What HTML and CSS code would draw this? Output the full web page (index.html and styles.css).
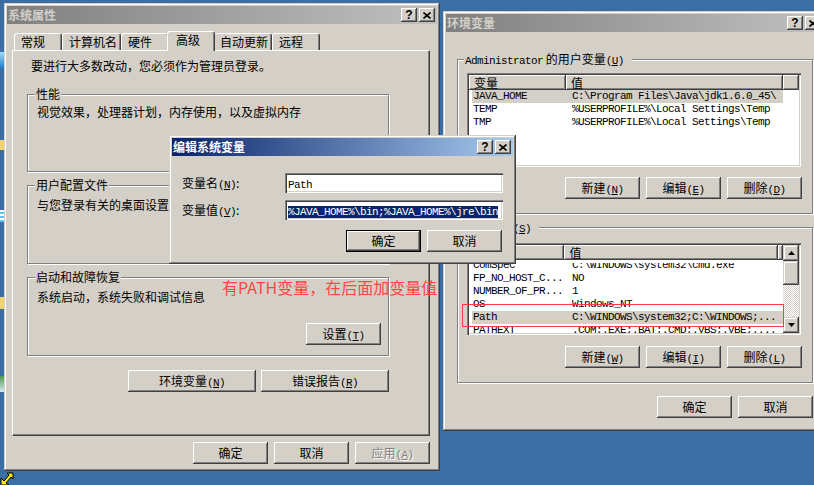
FILE: index.html
```html
<!DOCTYPE html>
<html>
	<head>
		<meta charset="utf-8"/>
		<meta name="viewport" content="width=device-width"/>
		<link rel="stylesheet" href="styles.css">
	</head>
	<body>
		<div class="dbit d1"></div>
		<div class="dbit d2"></div>
		<div class="dbit d3"></div>
		<div class="dbit d4"></div>
		<div class="dbit d5"></div>
		<svg class="shortcut" width="14" height="17" viewBox="0 0 14 17"><path d="M1 16V9l3 3 5-6-2-2h6v6l-2-2-5 6 3 2z" fill="#ffe800" stroke="#000" stroke-width="1"/></svg>

		<div class="win sysprop">
			<div class="titlebar off">
				<span class="caption">系统属性</span>
				<span class="tbtn help">?</span>
				<span class="tbtn close"><svg width="8" height="7" viewBox="0 0 8 7"><path d="M0.5 0.5L7.5 6.5M7.5 0.5L0.5 6.5"/></svg></span>
			</div>
			<div class="tabs">
				<div class="tab">常规</div>
				<div class="tab">计算机名</div>
				<div class="tab">硬件</div>
				<div class="tab on">高级</div>
				<div class="tab">自动更新</div>
				<div class="tab">远程</div>
			</div>
			<div class="panel">
				<p class="intro">要进行大多数改动，您必须作为管理员登录。</p>
				<fieldset class="group g1">
					<legend>性能</legend>
					<div class="gbody">
						<p>视觉效果，处理器计划，内存使用，以及虚拟内存</p>
						<div class="gbtns"><button class="btn">设置<span class="mn">(<u>S</u>)</span></button></div>
					</div>
				</fieldset>
				<fieldset class="group">
					<legend>用户配置文件</legend>
					<div class="gbody">
						<p>与您登录有关的桌面设置</p>
						<div class="gbtns"><button class="btn">设置<span class="mn">(<u>E</u>)</span></button></div>
					</div>
				</fieldset>
				<fieldset class="group">
					<legend>启动和故障恢复</legend>
					<div class="gbody">
						<p>系统启动，系统失败和调试信息</p>
						<div class="gbtns"><button class="btn">设置<span class="mn">(<u>T</u>)</span></button></div>
					</div>
				</fieldset>
				<div class="sysbtns">
					<button class="btn long">环境变量<span class="mn">(<u>N</u>)</span></button>
					<button class="btn long">错误报告<span class="mn">(<u>R</u>)</span></button>
				</div>
			</div>
			<div class="footer">
				<button class="btn">确定</button>
				<button class="btn">取消</button>
				<button class="btn" disabled>应用<span class="mn">(<u>A</u>)</span></button>
			</div>
		</div>

		<div class="win envvars">
			<div class="titlebar off">
				<span class="caption">环境变量</span>
				<span class="tbtn help">?</span>
				<span class="tbtn close"><svg width="8" height="7" viewBox="0 0 8 7"><path d="M0.5 0.5L7.5 6.5M7.5 0.5L0.5 6.5"/></svg></span>
			</div>
			<fieldset class="group vars user">
				<legend><span class="mono">Administrator</span> 的用户变量<span class="mn">(<u>U</u>)</span></legend>
				<div class="listview">
					<div class="lvmain">
						<div class="lvhead"><span class="hcol c1">变量</span><span class="hcol c2">值</span><span class="hcol fill"></span></div>
						<div class="lvbody">
							<div class="row sel"><span class="c1">JAVA_HOME</span><span class="c2">C:\Program Files\Java\jdk1.6.0_45\</span></div>
							<div class="row"><span class="c1">TEMP</span><span class="c2">%USERPROFILE%\Local Settings\Temp</span></div>
							<div class="row"><span class="c1">TMP</span><span class="c2">%USERPROFILE%\Local Settings\Temp</span></div>
						</div>
					</div>
				</div>
				<div class="btnrow">
					<button class="btn">新建<span class="mn">(<u>N</u>)</span></button>
					<button class="btn">编辑<span class="mn">(<u>E</u>)</span></button>
					<button class="btn">删除<span class="mn">(<u>D</u>)</span></button>
				</div>
			</fieldset>
			<fieldset class="group vars sys">
				<legend>系统变量<span class="mn">(<u>S</u>)</span></legend>
				<div class="listview">
					<div class="lvmain">
						<div class="lvhead"><span class="hcol c1">变量</span><span class="hcol c2">值</span><span class="hcol fill"></span></div>
						<div class="lvbody clip">
							<div class="row"><span class="c1">ComSpec</span><span class="c2">C:\WINDOWS\system32\cmd.exe</span></div>
							<div class="row"><span class="c1">FP_NO_HOST_C...</span><span class="c2">NO</span></div>
							<div class="row"><span class="c1">NUMBER_OF_PR...</span><span class="c2">1</span></div>
							<div class="row"><span class="c1">OS</span><span class="c2">Windows_NT</span></div>
							<div class="row sel"><span class="c1">Path</span><span class="c2">C:\WINDOWS\system32;C:\WINDOWS;...</span></div>
							<div class="row"><span class="c1">PATHEXT</span><span class="c2">.COM;.EXE;.BAT;.CMD;.VBS;.VBE;....</span></div>
						</div>
					</div>
					<div class="vscroll">
						<span class="sbtn"><svg width="7" height="4" viewBox="0 0 7 4"><path d="M3.5 0L7 4H0z"/></svg></span>
						<span class="thumb"></span>
						<span class="track"></span>
						<span class="sbtn"><svg width="7" height="4" viewBox="0 0 7 4"><path d="M0 0h7L3.5 4z"/></svg></span>
					</div>
				</div>
				<div class="btnrow">
					<button class="btn">新建<span class="mn">(<u>W</u>)</span></button>
					<button class="btn">编辑<span class="mn">(<u>I</u>)</span></button>
					<button class="btn">删除<span class="mn">(<u>L</u>)</span></button>
				</div>
			</fieldset>
			<div class="footer envfoot">
				<button class="btn">确定</button>
				<button class="btn">取消</button>
			</div>
		</div>

		<div class="win editvar">
			<div class="titlebar on">
				<span class="caption">编辑系统变量</span>
				<span class="tbtn help">?</span>
				<span class="tbtn close"><svg width="8" height="7" viewBox="0 0 8 7"><path d="M0.5 0.5L7.5 6.5M7.5 0.5L0.5 6.5"/></svg></span>
			</div>
			<div class="field first">
				<label>变量名<span class="mn">(<u>N</u>)</span>:</label>
				<div class="input"><span class="mono">Path</span></div>
			</div>
			<div class="field">
				<label>变量值<span class="mn">(<u>V</u>)</span>:</label>
				<div class="input"><span class="mono hl">%JAVA_HOME%\bin;%JAVA_HOME%\jre\bin</span></div>
			</div>
			<div class="dlgbtns">
				<button class="btn def">确定</button>
				<button class="btn">取消</button>
			</div>
		</div>

		<div class="note">有PATH变量，在后面加变量值</div>
		<div class="mark"></div>
	</body>
</html>
```

FILE: styles.css
```css
body{
	margin:0;
	width:814px;
	height:485px;
	overflow:hidden;
	position:relative;
	background:#3a6ea5;
	font:12px/14px "Noto Sans CJK SC", sans-serif;
	color:#000;
}
p{
	margin:0;
}
.mono,.mn{
	font-family:"Liberation Mono", monospace;
	font-size:11px;
	line-height:8px;
	letter-spacing:-0.6px;
}

/* desktop leftovers at the left edge */
.dbit{
	position:absolute;
	left:0;
	width:4px;
}
.d1{top:52px;height:16px;background:linear-gradient(#9fdcf8,#1e7fcf);}
.d2{top:140px;height:10px;background:#f1d46e;}
.d3{top:210px;height:12px;background:repeating-linear-gradient(#fff 0 2px,#5cc6ee 2px 4px);}
.d4{top:297px;height:12px;background:#f1d46e;}
.d5{top:376px;height:16px;background:linear-gradient(#4d9c4d,#d8e8f0);}
.shortcut{
	position:absolute;
	left:0;
	top:469px;
}

/* windows */
.win{
	position:absolute;
	box-sizing:border-box;
	padding:3px;
	background:#d4d0c8;
	box-shadow:inset -1px -1px #404040, inset 1px 1px #d4d0c8, inset -2px -2px #808080, inset 2px 2px #fff;
}
.sysprop{left:4px;top:3px;width:436px;height:468px;}
.envvars{left:443px;top:11px;width:383px;height:420px;}
.editvar{left:169px;top:135px;width:347px;height:129px;}

.titlebar{
	height:18px;
	display:flex;
	align-items:center;
	padding:0 2px 0 1px;
	font-weight:bold;
	color:#fff;
	white-space:nowrap;
}
.titlebar.off{
	background:linear-gradient(to right,#808080,#c0c0c0);
	color:#d4d0c8;
}
.titlebar.on{
	background:linear-gradient(to right,#0a246a,#a6caf0);
}
.caption{
	flex:1;
}
.tbtn{
	width:16px;
	height:14px;
	margin-left:2px;
	box-sizing:border-box;
	display:flex;
	align-items:center;
	justify-content:center;
	background:#d4d0c8;
	color:#000;
	box-shadow:inset -1px -1px #404040, inset 1px 1px #fff, inset -2px -2px #808080;
}
.help{
	font:bold 12px/14px "Liberation Sans", sans-serif;
}
.close svg path{
	stroke:#000;
	stroke-width:1.6;
}

/* tabs */
.tabs{
	display:flex;
	align-items:flex-end;
	height:19px;
	margin-top:7px;
	padding-left:7px;
}
.tab{
	min-width:48px;
	height:17px;
	box-sizing:border-box;
	padding:1px 3px 0 6px;
	border-top:1px solid #fff;
	border-left:1px solid #fff;
	border-right:1px solid #404040;
	border-radius:3px 3px 0 0;
	box-shadow:inset -1px 0 #808080;
	white-space:nowrap;
}
.tab.on{
	height:20px;
	margin:0 -2px -1px;
	padding:1px 5px 0 8px;
	position:relative;
	z-index:1;
	background:#d4d0c8;
}
.panel{
	margin-left:5px;
	width:418px;
	height:386px;
	box-sizing:border-box;
	padding:8px 0 0 14px;
	border:1px solid;
	border-color:#fff #404040 #404040 #fff;
	box-shadow:inset -1px -1px #808080;
}
.intro{
	margin-left:4px;
}

/* group boxes */
.group{
	margin:0;
	padding:0 7px;
	min-width:0;
	box-sizing:border-box;
	border:1px solid #808080;
	box-shadow:inset 1px 1px #fff, 1px 1px #fff;
}
.group legend{
	padding:0 1px;
	line-height:14px;
	background:#d4d0c8;
}
.panel .group{
	width:362px;
	margin-top:6px;
}
.panel .g1{
	margin-top:14px;
}
.gbody{
	height:71px;
	box-sizing:border-box;
	padding-top:6px;
}
.g1 .gbody{
	height:70px;
	padding-top:4px;
}
.gbody p{
	margin-left:2px;
}
.gbtns{
	display:flex;
	justify-content:flex-end;
	margin-top:19px;
}
.sysbtns{
	display:flex;
	justify-content:flex-end;
	gap:5px;
	width:362px;
	margin-top:14px;
}

/* buttons */
.btn{
	flex:none;
	width:75px;
	height:22px;
	margin:0;
	padding:0;
	border:0;
	background:#d4d0c8;
	color:#000;
	font:12px/14px "Noto Sans CJK SC", sans-serif;
	white-space:nowrap;
	box-shadow:inset -1px -1px #404040, inset 1px 1px #fff, inset -2px -2px #808080;
}
.btn.long{
	width:128px;
}
.btn.def{
	box-shadow:inset 0 0 0 1px #000, inset -2px -2px #404040, inset 2px 2px #fff, inset -3px -3px #808080;
}
.btn:disabled{
	color:#808080;
	text-shadow:1px 1px #fff;
}
.footer{
	display:flex;
	justify-content:flex-end;
	gap:6px;
	width:423px;
	margin-top:6px;
}

/* environment variables */
.vars{
	width:356px;
	margin-left:11px;
	padding:0 6px 14px;
}
.vars legend{
	padding:0 8px 0 1px;
}
.user{
	margin-top:20px;
}
.sys{
	margin-top:6px;
}
.listview{
	display:flex;
	width:334px;
	margin-left:3px;
	box-sizing:border-box;
	padding:2px;
	overflow:hidden;
	background:#fff;
	box-shadow:inset 1px 1px #808080, inset 2px 2px #404040, inset -1px -1px #fff, inset -2px -2px #d4d0c8;
}
.user .listview{
	height:94px;
	margin-top:7px;
}
.sys .listview{
	height:92px;
	margin-top:9px;
}
.lvmain{
	flex:1;
	min-width:0;
	display:flex;
	flex-direction:column;
	overflow:hidden;
}
.lvhead{
	display:flex;
	flex:none;
	height:15px;
}
.hcol{
	box-sizing:border-box;
	padding-left:5px;
	line-height:15px;
	background:#d4d0c8;
	box-shadow:inset -1px -1px #404040, inset 1px 1px #fff, inset -2px -2px #808080;
}
.hcol.c1{width:97px;}
.hcol.c2{width:217px;}
.hcol.fill{flex:1;}
.lvbody{
	flex:1;
	overflow:hidden;
}
.lvbody.clip{
	margin-top:3px;
}
.lvbody.clip .row:first-child{
	margin-top:-4px;
}
.row{
	display:flex;
	width:311px;
	height:13px;
	margin-left:3px;
	line-height:13px;
	white-space:nowrap;
	font-family:"Liberation Mono", monospace;
	font-size:11px;
	letter-spacing:-0.6px;
}
.row.sel{
	background:#d4d0c8;
}
.row .c1{
	width:94px;
	flex:none;
	padding-left:1px;
	box-sizing:border-box;
	overflow:hidden;
}
.row .c2{
	padding-left:6px;
}
.vscroll{
	width:16px;
	flex:none;
	display:flex;
	flex-direction:column;
	background:repeating-conic-gradient(#fff 0 25%, #d4d0c8 0 50%) 0 0/2px 2px;
}
.sbtn,.thumb{
	background:#d4d0c8;
	box-shadow:inset -1px -1px #404040, inset 1px 1px #d4d0c8, inset -2px -2px #808080, inset 2px 2px #fff;
}
.sbtn{
	height:16px;
	display:flex;
	align-items:center;
	justify-content:center;
}
.thumb{
	height:24px;
}
.track{
	flex:1;
}
.btnrow{
	display:flex;
	justify-content:flex-end;
	gap:6px;
	padding-right:4px;
	margin-top:10px;
}
.sys .btnrow{
	margin-top:11px;
}
.envfoot{
	width:auto;
	padding-right:10px;
	margin-top:13px;
}

/* edit dialog */
.field{
	display:flex;
	align-items:center;
	padding-left:10px;
	margin-top:7px;
}
.field.first{
	margin-top:17px;
}
.field label{
	width:103px;
}
.input{
	width:218px;
	height:20px;
	box-sizing:border-box;
	padding:3px 0 0 3px;
	overflow:hidden;
	white-space:nowrap;
	background:#fff;
	box-shadow:inset 1px 1px #808080, inset 2px 2px #404040, inset -1px -1px #fff, inset -2px -2px #d4d0c8;
}
.hl{
	background:#0a246a;
	color:#fff;
}
.dlgbtns{
	display:flex;
	justify-content:flex-end;
	gap:6px;
	padding-right:11px;
	margin-top:10px;
}

/* annotation drawn over the screenshot */
.note{
	position:absolute;
	left:222px;
	top:277px;
	font-size:16px;
	line-height:20px;
	color:#ff4646;
	white-space:nowrap;
}
.mark{
	position:absolute;
	left:462px;
	top:304px;
	width:322px;
	height:23px;
	box-sizing:border-box;
	border:1px solid #ff3b3b;
}
```
